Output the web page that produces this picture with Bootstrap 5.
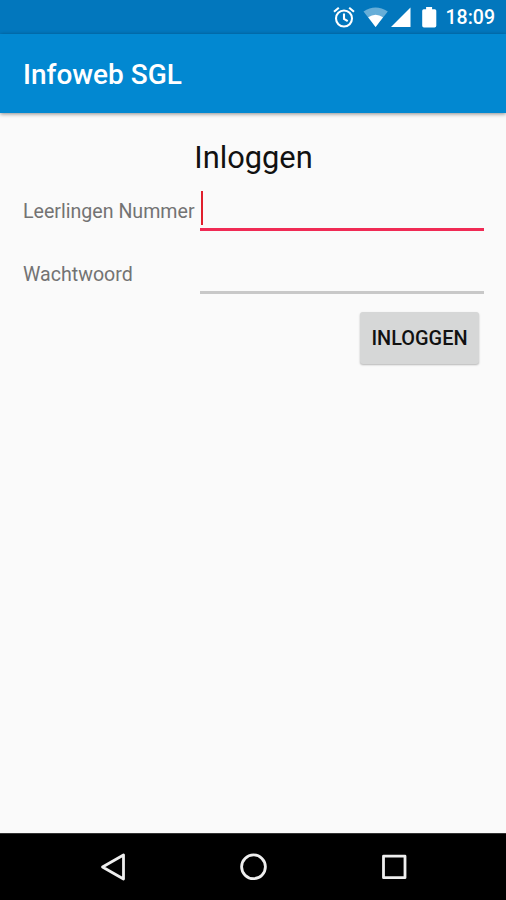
<!DOCTYPE html>
<html lang="nl">
<head>
<meta charset="utf-8">
<meta name="viewport" content="width=device-width, initial-scale=1">
<title>Infoweb SGL</title>
<link href="https://cdn.jsdelivr.net/npm/bootstrap@5.3.0/dist/css/bootstrap.min.css" rel="stylesheet">
<style>
body { font-family: Roboto, "Liberation Sans", sans-serif; background: #fafafa; height: 900px; }
.status-bar { height: 34px; background: #0277bd; font-size: 19.5px; font-weight: 500; padding: 1px 11px 0 0; }
.status-bar svg { display: block; margin-top: -1px; }
.app-bar { height: 79px; background: #0288d1; padding: 3px 23px 0; box-shadow: 0 1px 4px rgba(0,0,0,.45); }
.app-title { font-size: 28px; font-weight: 500; line-height: 1; }
.login-form { padding: 25px 22px 0 23px; }
.login-title { font-size: 30.8px; font-weight: 400; line-height: 39px; color: #111; margin-bottom: 14px; }
.field-row { height: 40px; }
.field-row + .field-row { margin-top: 23px; }
.field-row label { width: 177px; font-size: 19.6px; line-height: 42px; color: #737373; white-space: nowrap; }
.field-line { border-bottom: 3px solid #c8c8c8; }
.field-line.active { border-color: #f02a54; }
.caret { width: 2px; height: 34px; margin-left: 1px; background: #e01f2d; }
.login-btn { width: 119px; height: 52px; margin: 18px 5px 0 0; padding-top: 2px; background: #d6d7d7; color: #111; font-size: 19.9px; font-weight: 500; border-radius: 3px; box-shadow: 0 1px 2px rgba(0,0,0,.28); }
.nav-keys { height: 67px; background: #000; border-top: 1px solid #333; }
.nav-keys svg { display: block; }
</style>
</head>
<body class="d-flex flex-column overflow-hidden">
<header class="text-white">
  <div class="status-bar d-flex align-items-center justify-content-end">
    <svg width="114" height="34" viewBox="0 0 114 34" fill="none" aria-hidden="true">
      <g stroke="#fff" stroke-width="2.1">
        <circle cx="12" cy="18.500" r="8"/>
        <path d="M12 13.500v5.300l3.700 2.300M2 11.800l4.800-4M22 11.800l-4.800-4"/>
      </g>
      <path d="M31.500 11.600Q43.500 3.200 55.800 11.600L43.600 27z" fill="#67aed8"/>
      <path d="M36.200 17.200Q43.600 12.200 51 17.200L43.600 27z" fill="#fff"/>
      <path d="M78.500 7.500V27H59z" fill="#fff"/>
      <path d="M94.100 7h6v2.200h2.700q1.500 0 1.500 1.500v15q0 1.800-1.800 1.800H92q-1.800 0-1.800-1.800v-15q0-1.500 1.500-1.500h2.400z" fill="#fff"/>
    </svg>
    <span>18:09</span>
  </div>
  <nav class="app-bar position-relative d-flex align-items-center">
    <span class="app-title">Infoweb SGL</span>
  </nav>
</header>
<main class="flex-grow-1">
  <form class="login-form">
    <h1 class="login-title text-center">Inloggen</h1>
    <div class="field-row d-flex">
      <label>Leerlingen Nummer</label>
      <div class="field-line active flex-grow-1"><div class="caret"></div></div>
    </div>
    <div class="field-row d-flex">
      <label>Wachtwoord</label>
      <div class="field-line flex-grow-1"></div>
    </div>
    <div class="d-flex justify-content-end">
      <button type="button" class="login-btn btn border-0 px-0 pb-0">INLOGGEN</button>
    </div>
  </form>
</main>
<footer class="nav-keys d-flex justify-content-center">
  <svg width="310" height="66" viewBox="0 0 310 66" fill="none" stroke="#eee" stroke-width="2.8" stroke-linejoin="round" aria-hidden="true">
    <path d="M25.500 21v24L4.500 33z"/>
    <circle cx="155.500" cy="32.800" r="11.900"/>
    <rect x="285.500" y="22.200" width="21.500" height="21.500"/>
  </svg>
</footer>
<script src="https://cdn.jsdelivr.net/npm/bootstrap@5.3.0/dist/js/bootstrap.bundle.min.js"></script>
</body>
</html>
